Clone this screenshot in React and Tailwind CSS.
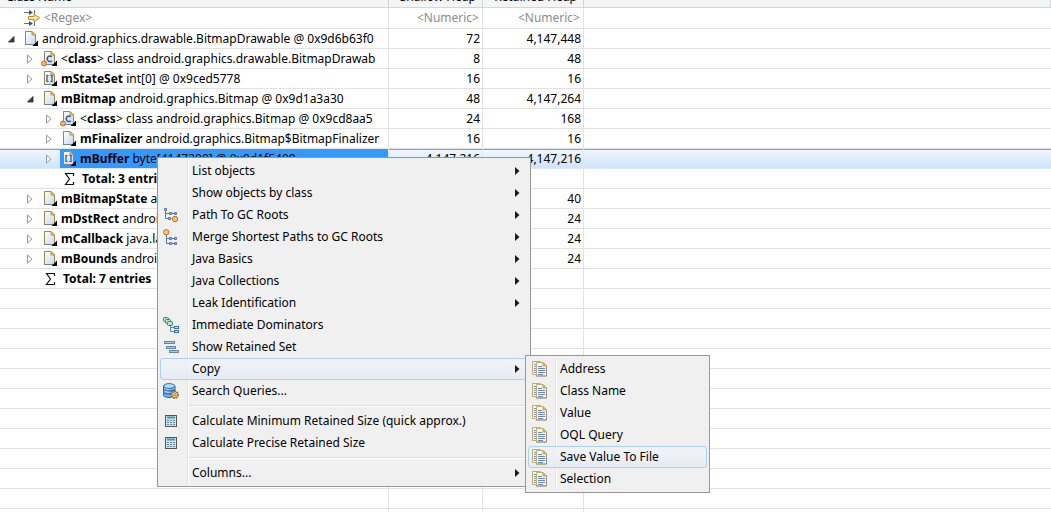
import React from "react";

const DocBase = ({ children }) => (
  <svg width="16" height="16" viewBox="0 0 16 16" className="block flex-none" aria-hidden="true">
    <defs>
      <linearGradient id="docFill" x1="0" y1="0" x2="1" y2="1">
        <stop offset="0" stopColor="#ffffff" />
        <stop offset="1" stopColor="#c6d6f2" />
      </linearGradient>
    </defs>
    <path d="M3.5 0.5h6.500l3.500 3.500v9.500h-10z" fill="url(#docFill)" stroke="#9c8748" />
    <path d="M10 0.5v3.500h3.500z" fill="#ecd08a" stroke="#b8963c" />
    <path d="M3 13.500h10" stroke="#76808c" />
    {children}
    <path d="M16 9.500v5.500h-5.500z" fill="#000" />
  </svg>
);

const ObjectIcon = () => <DocBase />;

const ArrayIcon = () => (
  <DocBase>
    <path d="M7.500 4.500H6v6h1.500M9.500 4.500H11v6H9.500" fill="none" stroke="#27508f" strokeWidth="1.200" />
  </DocBase>
);

const ClassIcon = () => (
  <DocBase>
    <path d="M10.800 5.800a2.700 2.700 0 1 0 0 3.900" fill="none" stroke="#2a5a9c" strokeWidth="1.400" />
    <circle cx="3" cy="12.500" r="2.500" fill="#f7b267" stroke="#c8661c" />
  </DocBase>
);

const SumIcon = () => (
  <svg width="16" height="16" viewBox="0 0 16 16" className="block flex-none" aria-hidden="true">
    <path d="M13.500 5V2.500H5.500L9.500 8 5.500 13.500h8V11" fill="none" stroke="#111" strokeWidth="1.200" />
  </svg>
);

const FilterIcon = () => (
  <svg width="16" height="16" viewBox="0 0 16 16" className="block flex-none" aria-hidden="true">
    <path d="M0 2.500h6M0 13.500h6M10.500 0v4M10.500 12v4" stroke="#56758f" fill="none" />
    <path d="M5 0l4 2.500L5 5zM5 11l4 2.500L5 16z" fill="#34546e" />
    <path d="M4.500 6.500h5.500V4l5.500 4-5.500 4V9.500H4.500z" fill="#fbe3a0" stroke="#c08a1e" />
  </svg>
);

const PathIcon = () => (
  <svg width="16" height="16" viewBox="0 0 16 16" className="block" aria-hidden="true">
    <path d="M2.500 3v8.500h6M2.500 6.500h10" stroke="#5577b0" fill="none" />
    <path d="M1.500 1.500h2v2h-2zM6.500 5.500h2v2h-2zM11.500 5.500h2v2h-2zM5.500 10.500h2v2h-2z" fill="#a9bfe2" stroke="#5577b0" />
    <circle cx="12" cy="12" r="2.700" fill="#fbc27a" stroke="#c9701c" />
  </svg>
);

const MergeIcon = () => (
  <svg width="16" height="16" viewBox="0 0 16 16" className="block" aria-hidden="true">
    <path d="M3.500 6v8.500h10M3.500 9.500h10" stroke="#5577b0" fill="none" />
    <path d="M6.500 8.500h2v2h-2zM11.500 8.500h2v2h-2zM6.500 13.500h2v2h-2zM11.500 13.500h2v2h-2z" fill="#a9bfe2" stroke="#5577b0" />
    <circle cx="3.200" cy="3.200" r="2.700" fill="#fbc27a" stroke="#c9701c" />
  </svg>
);

const DominatorIcon = () => (
  <svg width="16" height="16" viewBox="0 0 16 16" className="block" aria-hidden="true">
    <g fill="#bfe3c8" stroke="#2f8a56">
      <rect x="0.500" y="0.500" width="5" height="4" rx="1" />
      <rect x="2.500" y="2.500" width="5" height="4" rx="1" />
      <rect x="4.500" y="4.500" width="5" height="4" rx="1" />
    </g>
    <path d="M7.500 9v5.500h4M7.500 10.500h4" stroke="#6a86a8" fill="none" />
    <g fill="#cfe3fa" stroke="#3a6cb4">
      <rect x="11.500" y="9.500" width="4" height="2" />
      <rect x="11.500" y="13.500" width="4" height="2" />
    </g>
  </svg>
);

const RetainedIcon = () => (
  <svg width="16" height="16" viewBox="0 0 16 16" className="block" aria-hidden="true">
    <g fill="#a9c6e0" stroke="#6387ad">
      <rect x="1.500" y="2.500" width="10" height="2" />
      <rect x="3.500" y="7.500" width="9" height="2" />
      <rect x="6.500" y="11.500" width="9" height="2" />
    </g>
  </svg>
);

const QueryIcon = () => (
  <svg width="16" height="16" viewBox="0 0 16 16" className="block" aria-hidden="true">
    <path d="M0.500 3v9c0 1.500 2 2.500 5.500 2.500s6-1 6-2.500V3z" fill="#6fb0ea" stroke="#2b6cb8" />
    <path d="M1 6.500c1 2 9 2 11 0M1 9.500c1 2 9 2 11 0" stroke="#1f5ca8" fill="none" />
    <path d="M2 8c1 1 3 1.300 4 1.300M2 5.200c1 1 3 1.200 4 1.200" stroke="#d6ecff" fill="none" />
    <ellipse cx="6.200" cy="3" rx="5.600" ry="2.400" fill="#b5dcf8" stroke="#2b6cb8" />
    <circle cx="11.700" cy="11.700" r="3.500" fill="#f3d58f" stroke="#8a5a22" strokeWidth="1.400" strokeDasharray="1.700 0.900" />
    <circle cx="11.700" cy="11.700" r="2.900" fill="#f3d58f" stroke="#a06c28" strokeWidth="0.800" />
    <circle cx="11.700" cy="11.700" r="1.100" fill="#fff" stroke="#8a5a22" strokeWidth="0.800" />
  </svg>
);

const CalcIcon = () => (
  <svg width="16" height="16" viewBox="0 0 16 16" className="block" aria-hidden="true">
    <rect x="2.500" y="2.500" width="11" height="11" fill="#d3e2e4" stroke="#55554a" />
    <path d="M4 4.500h8" stroke="#4d93b8" strokeWidth="2" />
    <path d="M4 7.500h8M4 9.500h8M4 11.500h8" stroke="#5d8aa0" strokeDasharray="2 1" />
  </svg>
);

const CopyIcon = () => (
  <svg width="16" height="16" viewBox="-1 0 16 16" className="block" aria-hidden="true">
    <path d="M0.500 0.500h8v13h-8z" fill="#f6f4ea" stroke="#c4ad66" />
    <path d="M2 3.500h2M2 5.500h2M2 7.500h2M2 9.500h2M2 11.500h2" stroke="#7f96c4" />
    <path d="M4.500 1.500h6.500l3.500 3.500v10h-10z" fill="#f3f7fd" stroke="#c4ad66" />
    <path d="M11 1.500v3.500h3.500z" fill="#e8c25c" stroke="#c9a040" />
    <path d="M4 15h10.500v-9" stroke="#92928a" fill="none" />
    <path d="M6 5.500h4M6 7.500h7M6 9.500h7M6 11.500h7M6 13.500h5" stroke="#6d88c0" />
  </svg>
);

const rows = [
  { level: 0, open: true, Icon: ObjectIcon, text: "android.graphics.drawable.BitmapDrawable @ 0x9d6b63f0", shallow: "72", retained: "4,147,448" },
  { level: 1, open: false, Icon: ClassIcon, bracket: "class", text: "class android.graphics.drawable.BitmapDrawab", shallow: "8", retained: "48" },
  { level: 1, open: false, Icon: ArrayIcon, name: "mStateSet", text: "int[0] @ 0x9ced5778", shallow: "16", retained: "16" },
  { level: 1, open: true, Icon: ObjectIcon, name: "mBitmap", text: "android.graphics.Bitmap @ 0x9d1a3a30", shallow: "48", retained: "4,147,264" },
  { level: 2, open: false, Icon: ClassIcon, bracket: "class", text: "class android.graphics.Bitmap @ 0x9cd8aa5", shallow: "24", retained: "168" },
  { level: 2, open: false, Icon: ObjectIcon, name: "mFinalizer", text: "android.graphics.Bitmap$BitmapFinalizer", shallow: "16", retained: "16" },
  { level: 2, open: false, Icon: ArrayIcon, name: "mBuffer", text: "byte[4147200] @ 0x9d1f5408", shallow: "4,147,216", retained: "4,147,216", selected: true },
  { level: 2, total: true, Icon: SumIcon, name: "Total: 3 entries" },
  { level: 1, open: false, Icon: ObjectIcon, name: "mBitmapState", text: "android", shallow: "40", retained: "40" },
  { level: 1, open: false, Icon: ObjectIcon, name: "mDstRect", text: "android", shallow: "24", retained: "24" },
  { level: 1, open: false, Icon: ObjectIcon, name: "mCallback", text: "java.lang", shallow: "24", retained: "24" },
  { level: 1, open: false, Icon: ObjectIcon, name: "mBounds", text: "android", shallow: "24", retained: "24" },
  { level: 1, total: true, Icon: SumIcon, name: "Total: 7 entries" },
];

const indents = ["pl-[6px]", "pl-[25px]", "pl-[44px]"];

function Toggle({ row }) {
  if (row.total) return <span className="w-4 flex-none" />;
  return (
    <button type="button" aria-expanded={row.open} aria-label={row.open ? "Collapse" : "Expand"} className="flex h-4 w-4 flex-none items-center pl-0.5">
      <svg width="8" height="10" viewBox="0 0 8 10" aria-hidden="true">
        {row.open ? (
          <path d="M6 2.500v5.500H0.500z" fill="#404040" stroke="#262626" strokeWidth="0.800" />
        ) : (
          <path d="M0.500 1l4.500 4-4.500 4z" fill="#fff" stroke="#999" />
        )}
      </svg>
    </button>
  );
}

function TreeRow({ row }) {
  const sel = row.selected;
  const line = sel ? "border-[#d9e8fa]" : "border-[#e2e2e2]";
  const cell = `h-5 border-b p-0 ${line}`;
  const num = `${cell} border-r pr-0.5 text-right`;
  return (
    <tr className={sel ? "bg-linear-to-b from-[#f1f7ff] to-[#cde3fd] shadow-[inset_0_1px_0_#7da2ce]" : ""}>
      <td className={`${cell} border-r`}>
        <div className={`flex h-[19px] items-center overflow-hidden whitespace-pre ${indents[row.level]}`}>
          <Toggle row={row} />
          <div className={`flex h-full min-w-0 flex-1 items-center gap-1 ${sel ? "bg-[#3399ff]" : ""}`}>
            <row.Icon />
            <span className={row.total ? "pl-0.5" : ""}>
              {row.bracket && <>&lt;<b>{row.bracket}</b>&gt; </>}
              {row.name && <b>{row.name}</b>}
              {row.name && row.text ? " " : ""}
              {row.text}
            </span>
          </div>
        </div>
      </td>
      <td className={num}>{row.shallow}</td>
      <td className={num}>{row.retained}</td>
      <td className={cell} />
    </tr>
  );
}

function HeaderCell({ children, className = "" }) {
  return (
    <th scope="col" className="border-b border-r border-[#d5d5d5] bg-[#f4f5f7] p-0 font-normal">
      <div className={`flex h-[7px] items-end overflow-hidden leading-4 ${className}`}>
        <span className="pb-0.5">{children}</span>
      </div>
    </th>
  );
}

const filterInput = "block w-full bg-transparent p-0 leading-5 outline-none placeholder:text-[#8c8c8c] placeholder:opacity-100";

function HeapTable() {
  const filterCell = "h-[21px] border-b border-r border-[#e2e2e2] p-0";
  return (
    <table className="w-full table-fixed border-separate border-spacing-0">
      <colgroup>
        <col className="w-[389px]" />
        <col className="w-[94px]" />
        <col className="w-[101px]" />
        <col />
      </colgroup>
      <thead>
        <tr>
          <HeaderCell className="pl-1.5">Class Name</HeaderCell>
          <HeaderCell className="justify-end pr-1.5">Shallow Heap</HeaderCell>
          <HeaderCell className="justify-end pr-1.5">Retained Heap</HeaderCell>
          <HeaderCell />
        </tr>
      </thead>
      <tbody>
        <tr>
          <td className={filterCell}>
            <div className="flex items-center gap-1 pl-6">
              <FilterIcon />
              <input aria-label="Class name filter" placeholder="<Regex>" className={filterInput} />
            </div>
          </td>
          <td className={filterCell}>
            <input aria-label="Shallow heap filter" placeholder="<Numeric>" className={`${filterInput} pr-[3px] text-right`} />
          </td>
          <td className={filterCell}>
            <input aria-label="Retained heap filter" placeholder="<Numeric>" className={`${filterInput} pr-[3px] text-right`} />
          </td>
          <td className="border-b border-[#e2e2e2] p-0" />
        </tr>
        {rows.map((row, i) => (
          <TreeRow key={i} row={row} />
        ))}
        {Array.from({ length: 12 }, (_, i) => (
          <tr key={`empty-${i}`}>
            <td className="h-5 border-b border-r border-[#e2e2e2] p-0" />
            <td className="border-b border-r border-[#e2e2e2] p-0" />
            <td className="border-b border-r border-[#e2e2e2] p-0" />
            <td className="border-b border-[#e2e2e2] p-0" />
          </tr>
        ))}
      </tbody>
    </table>
  );
}

const copyItems = [
  { label: "Address", Icon: CopyIcon },
  { label: "Class Name", Icon: CopyIcon },
  { label: "Value", Icon: CopyIcon },
  { label: "OQL Query", Icon: CopyIcon },
  { label: "Save Value To File", Icon: CopyIcon, active: true },
  { label: "Selection", Icon: CopyIcon },
];

const menuItems = [
  { label: "List objects", more: true },
  { label: "Show objects by class", more: true },
  { label: "Path To GC Roots", Icon: PathIcon, more: true },
  { label: "Merge Shortest Paths to GC Roots", Icon: MergeIcon, more: true },
  { label: "Java Basics", more: true },
  { label: "Java Collections", more: true },
  { label: "Leak Identification", more: true },
  { label: "Immediate Dominators", Icon: DominatorIcon },
  { label: "Show Retained Set", Icon: RetainedIcon },
  { label: "Copy", more: true, active: true, items: copyItems },
  { label: "Search Queries...", Icon: QueryIcon },
  { separator: true },
  { label: "Calculate Minimum Retained Size (quick approx.)", Icon: CalcIcon },
  { label: "Calculate Precise Retained Size", Icon: CalcIcon },
  { separator: true },
  { label: "Columns...", more: true },
];

function MenuItem({ item }) {
  if (item.separator) {
    return (
      <li role="separator" className="flex h-2 items-center pl-[28px]">
        <span className="h-0.5 flex-1 border-b border-t border-b-white border-t-[#dedede]" />
      </li>
    );
  }
  return (
    <li role="none" className="relative">
      <button
        type="button"
        role="menuitem"
        className={`flex h-[22px] w-full items-center rounded-[3px] border pl-0.5 pr-[7px] text-left whitespace-nowrap ${
          item.active ? "border-[#aecff7] bg-linear-to-b from-[#f2f4f7]/80 to-[#e4ebf6]/80" : "border-transparent"
        }`}
      >
        <span className="w-[29px] flex-none">{item.Icon && <item.Icon />}</span>
        <span className="flex-1">{item.label}</span>
        {item.more && (
          <svg width="5" height="8" viewBox="0 0 5 8" aria-hidden="true">
            <path d="M0 0L4.500 4 0 8z" fill="#1a1a1a" />
          </svg>
        )}
      </button>
      {item.items && <Menu items={item.items} label={item.label} className="-top-[3px] left-[365px] w-[185px]" />}
    </li>
  );
}

function Menu({ items, label, className }) {
  return (
    <ul
      role="menu"
      aria-label={label}
      className={`absolute border border-[#979797] bg-[#f0f0f0] bg-[linear-gradient(to_right,transparent_27px,#e2e3e3_27px,#e2e3e3_28px,#fff_28px,#fff_29px,transparent_29px)] bg-origin-content bg-no-repeat p-0.5 ${className}`}
    >
      {items.map((item, i) => (
        <MenuItem key={i} item={item} />
      ))}
    </ul>
  );
}

export default function App() {
  return (
    <main className="relative h-screen overflow-hidden bg-white font-['Noto_Sans','Open_Sans',sans-serif] text-[12px] leading-[18px] text-black">
      <HeapTable />
      <Menu items={menuItems} label="Object actions" className="left-[157px] top-[157px] w-[374px]" />
    </main>
  );
}
